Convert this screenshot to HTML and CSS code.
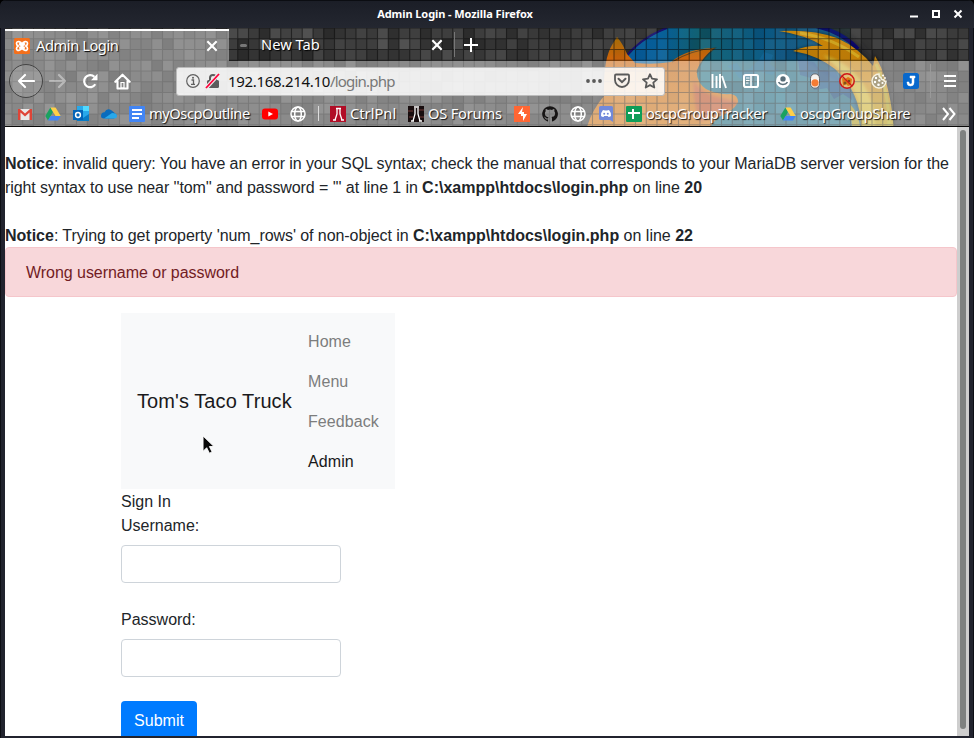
FILE: index.html
```html
<!DOCTYPE html>
<html lang="en">
<head>
<meta charset="utf-8">
<title>Admin Login</title>
<link rel="stylesheet" href="styles.css">
</head>
<body>
<svg width="0" height="0" class="defs">
  <symbol id="globe" viewBox="0 0 16 16"><g fill="none" stroke="#fff" stroke-width="1.5"><circle cx="8" cy="8" r="7"/><ellipse cx="8" cy="8" rx="3.3" ry="7"/><path d="M1.5 5.5h13M1.5 10.5h13"/></g></symbol>
  <symbol id="drive" viewBox="0 0 16 16"><path fill="#1aa260" d="M5.4 1.5 8 6 3 14.500.3 10z"/><path fill="#ffcf48" d="M5.4 1.5h5.2l5.1 8.5h-5.2z"/><path fill="#4285f4" d="M5.6 10h10.1L13 14.5H3z"/></symbol>
  <symbol id="close" viewBox="0 0 12 12"><path d="M2 2l8 8M10 2l-8 8" stroke="#fff" stroke-width="1.8" fill="none"/></symbol>
</svg>
<div class="window">
  <header class="titlebar">
    <span class="title">Admin Login - Mozilla Firefox</span>
    <svg class="controls" width="60" height="28" viewBox="0 0 60 28"><path d="M4 16.5h8" stroke="#fff" stroke-width="2"/><path d="M27 11h6v6h-6z" fill="none" stroke="#fff" stroke-width="2"/><path d="M48.500 10.500l7 7M55.500 10.500l-7 7" stroke="#fff" stroke-width="2"/></svg>
  </header>
  <div class="chrome">
    <svg class="theme" viewBox="5 28 964 99" width="964" height="99">
      <defs>
        <linearGradient id="sea" x1="0" x2="1"><stop offset="0" stop-color="#07579c"/><stop offset=".18" stop-color="#07609a"/><stop offset=".32" stop-color="#125f70"/><stop offset=".55" stop-color="#0a5481"/><stop offset="1" stop-color="#275a80"/></linearGradient>
        <linearGradient id="fur" x1="0" y1="0" x2="0" y2="1"><stop offset="0" stop-color="#a16b05"/><stop offset=".25" stop-color="#cf650c"/><stop offset=".4" stop-color="#c9701b"/><stop offset="1" stop-color="#d07a20"/></linearGradient>
        <linearGradient id="flame" x1="0" y1="0" x2="0" y2="1"><stop offset="0" stop-color="#c78508"/><stop offset=".3" stop-color="#c68208"/><stop offset=".5" stop-color="#c7871b"/><stop offset="1" stop-color="#b49a1a"/></linearGradient>
        <filter id="soft" x="-10%" y="-20%" width="120%" height="140%"><feGaussianBlur stdDeviation="3"/></filter>
        <filter id="blend" x="-10%" y="-20%" width="120%" height="140%"><feGaussianBlur stdDeviation="1.5"/></filter>
      </defs>
      <rect x="5" y="28" width="964" height="99" fill="#373737"/>
      <g id="mosaic"></g>
      <path d="M596 127Q602 80 627 60 643 40 668 28H832Q868 43 886 77 893 98 895 127z" fill="#18191b" opacity=".55" filter="url(#soft)"/>
      <path d="M610 127Q615 70 628 56 643 37 668 28H826Q858 42 879 78 891 99 892 127z" fill="url(#sea)"/>
      <path d="M700 61H806L850 90 862 127H690z" fill="#2f7182" opacity=".8" filter="url(#blend)"/>
      <path d="M624 59Q640 38 667 28" fill="none" stroke="#17126f" stroke-width="2"/>
      <path d="M816 26Q842 32 858 49" fill="none" stroke="#0b076a" stroke-width="4"/>
      <path d="M798 60l16 2 6 8 16 2 4 9 10 3 2 16-9-6-9 5-7-11-13 2-3-12-11-3z" fill="#143779" opacity=".6"/>
      <path d="M727 66l10-3 5 8 7-2 10-9 5-8 9 3-3 9 8 6-6 5-14-4-8 8-11-1-5-7z" fill="#1769a5" opacity=".4"/>
      <g id="tint"></g>
      <path d="M587 127Q592 110 604 96 603 60 612 45L617 37Q623 44 627 54L635 63Q654 65 671 62 688 48 715 48 702 57 697 70 696 82 706 89 717 95 731 94 738 95 738 102 733 112 718 117L710 127z" fill="url(#fur)"/>
      <path d="M694 79Q698 91 715 96L738 102Q729 113 714 115L700 122Q692 101 694 79z" fill="#b74932" opacity=".7" filter="url(#blend)"/>
      <path d="M672 62Q691 50 715 48 700 60 697 73" fill="none" stroke="#3d3827" stroke-width="1.200" opacity=".7"/>
      <path d="M779 31Q813 29 837 38 859 48 873 66L875 56Q889 77 894 127H861Q861 93 835 69 817 55 793 51 807 45 823 46 806 35 779 31z" fill="#07121a" opacity=".6" filter="url(#blend)"/>
      <path d="M779 31Q813 29 837 38 859 48 873 66L875 56Q889 77 894 127H861Q861 93 835 69 817 55 793 51 807 45 823 46 806 35 779 31z" fill="url(#flame)"/>
      <path d="M823 55Q847 61 862 82 875 101 875 127H863Q861 95 842 73 834 64 823 55z" fill="#d0bb3a" opacity=".8" filter="url(#blend)"/>
      <path d="M800 33Q833 38 859 57" fill="none" stroke="#d8ba30" stroke-width="3" opacity=".65"/>
      <path d="M876 64Q889 91 889 127" fill="none" stroke="#b6b12b" stroke-width="3" opacity=".65"/>
      <path d="M850 104q9 10 10 23h-8z" fill="#ac961f"/>
      <g id="texture"></g>
      <path id="lines" fill="none" stroke="#080808" stroke-opacity=".52" stroke-width="1.100"/>
    </svg>
    <nav class="tabs">
      <div class="tab active">
        <svg class="fav" width="16" height="16" viewBox="0 0 16 16"><rect width="16" height="16" rx="1.500" fill="#f4701c"/><path d="M8 6.300C7 3 2.500 2.600 2.500 5.400q0 1.700 1.700 2.600-1.700.9-1.700 2.600C2.500 13.400 7 13 8 9.700c1 3.300 5.500 3.700 5.500.9q0-1.700-1.700-2.600 1.700-.9 1.700-2.600C13.500 2.600 9 3 8 6.300zM5 5.500l5.800 5M11 5.500l-5.800 5" fill="none" stroke="#fff" stroke-width="1.700"/></svg>
        <span class="tabname">Admin Login</span>
        <svg width="14" height="14"><use href="#close"/></svg>
      </div>
      <div class="tab second">
        <i class="dash"></i><span class="tabname">New Tab</span>
        <svg width="14" height="14"><use href="#close"/></svg>
      </div>
      <svg class="plus" width="16" height="16" viewBox="0 0 16 16"><path d="M8 1v14M1 8h14" stroke="#fff" stroke-width="2"/></svg>
    </nav>
    <div class="toolbar">
      <span class="tool back"><svg width="18" height="16" viewBox="0 0 18 16"><path d="M17 8H2M8 2L2 8l6 6" fill="none" stroke="#fff" stroke-width="2.200" stroke-linecap="round" stroke-linejoin="round"/></svg></span>
      <span class="tool"><svg width="18" height="16" viewBox="0 0 18 16" opacity=".4"><path d="M1 8h15M10 2l6 6-6 6" fill="none" stroke="#fff" stroke-width="2.200" stroke-linecap="round" stroke-linejoin="round"/></svg></span>
      <span class="tool"><svg width="16" height="16" viewBox="0 0 16 16"><path d="M13.300 11.300A6 6 0 1 1 12.400 3.900" fill="none" stroke="#fff" stroke-width="2.200"/><path d="M15.500.7v6.500H9z" fill="#fff"/></svg></span>
      <span class="tool"><svg width="17" height="17" viewBox="0 0 17 17"><path d="M1.300 8.800L8.500 1.700l7.200 7.100M3.500 8v7.500h10V8" fill="none" stroke="#fff" stroke-width="2.100" stroke-linecap="round" stroke-linejoin="round"/><path d="M7 15V9.500h3V15z" fill="none" stroke="#fff" stroke-width="1.200"/></svg></span>
      <div class="urlbar">
        <svg width="14" height="14" viewBox="0 0 14 14"><circle cx="7" cy="7" r="6.300" fill="none" stroke="#606060" stroke-width="1.200"/><path d="M5.500 6H7.500v4.200M5 10.300h4" fill="none" stroke="#606060" stroke-width="1.300"/><circle cx="7" cy="3.700" r="1" fill="#606060"/></svg>
        <svg class="lock" width="16" height="16" viewBox="0 0 16 16"><rect x="2" y="7" width="12" height="8" rx="1.500" fill="#5c5c5c"/><path d="M5 7V5a3 3 0 0 1 6 0v2" fill="none" stroke="#5c5c5c" stroke-width="2"/><path d="M1 15L14 1" stroke="#eee" stroke-width="4"/><path d="M1 15L14 1" stroke="#ff0039" stroke-width="1.800"/></svg>
        <span class="url">192.168.214.10<span class="path">/login.php</span></span>
        <svg width="16" height="16" viewBox="0 0 16 16" fill="#5a5a5a"><circle cx="2" cy="8" r="1.900"/><circle cx="8" cy="8" r="1.900"/><circle cx="14" cy="8" r="1.900"/></svg>
        <svg width="16" height="16" viewBox="0 0 16 16" fill="none" stroke="#5a5a5a"><path d="M2 1.500h12q1 0 1 1V7A7 7 0 0 1 1 7V2.500q0-1 1-1z" stroke-width="1.800"/><path d="M4.500 5.800L8 9.200l3.500-3.400" stroke-width="2" stroke-linecap="round"/></svg>
        <svg width="16" height="16" viewBox="0 0 16 16"><path d="M8 1.200l2 4.500 5 .6-3.700 3.300 1 4.900L8 12.100l-4.300 2.400 1-4.900L1 6.300l5-.6z" fill="none" stroke="#5a5a5a" stroke-width="1.800" stroke-linejoin="round"/></svg>
      </div>
      <div class="extras">
        <span class="tool"><svg width="16" height="16" viewBox="0 0 16 16"><path d="M1.500 1v14M5.500 3v12M9 1v14M11 3l4 12" stroke="#fff" stroke-width="1.900"/></svg></span>
        <span class="tool"><svg width="16" height="16" viewBox="0 0 16 16"><rect x="1" y="2" width="14" height="12" rx="1.800" fill="none" stroke="#fff" stroke-width="2"/><path d="M8 2v12" stroke="#fff" stroke-width="1.500"/><path d="M3 5h3.500M3 7.500h3.500M3 10h2.500" stroke="#fff" stroke-width="1.200"/></svg></span>
        <span class="tool"><svg width="16" height="16" viewBox="0 0 16 16"><circle cx="8" cy="8" r="7" fill="#fff"/><circle cx="8" cy="5.900" r="2.700" fill="#596e79"/><path d="M3.500 9.200a5 4 0 0 0 9 0" fill="none" stroke="#596e79" stroke-width="1.600"/></svg></span>
        <span class="tool"><svg width="16" height="16" viewBox="0 0 16 16"><rect x="3.500" y=".8" width="9" height="14.400" rx="4.500" fill="#f4f1ee" stroke="#60646c"/><circle cx="8" cy="9.800" r="3.600" fill="#f47b35"/></svg></span>
        <span class="tool"><svg width="16" height="16" viewBox="0 0 16 16"><circle cx="8" cy="8" r="6.800" fill="#e5bf78"/><path d="M3 5l3 1 3-2 4 2-1 6-3 1-2-2-3 2z" fill="#de7815"/><circle cx="6" cy="10" r="1.500" fill="#80501c"/><circle cx="10" cy="8" r="1.200" fill="#784117"/><circle cx="8" cy="8" r="7.200" fill="none" stroke="#cf1717" stroke-width="1.500"/><path d="M3 3l10 10" stroke="#cf1717" stroke-width="1.300"/></svg></span>
        <span class="tool"><svg width="16" height="16" viewBox="0 0 16 16"><path d="M8 1A7 7 0 1 0 15 8.500q-2 .3-2.500-1.700-2.300.2-2.400-1.900Q7.700 4 8 1z" fill="#aaa083" stroke="#f4f0df" stroke-width="1.500"/><g fill="#fff"><circle cx="5" cy="5" r="1.200"/><circle cx="8.300" cy="7.500" r="1.200"/><circle cx="4" cy="9" r="1.200"/><circle cx="7.500" cy="11.800" r="1.300"/><circle cx="11.500" cy="10" r="1.100"/><circle cx="12" cy="2.500" r="1"/><circle cx="14" cy="5" r=".9"/></g></svg></span>
        <span class="tool"><svg width="16" height="16" viewBox="0 0 16 16"><rect width="16" height="16" rx="2.500" fill="#0868cc"/><path d="M7 3h5v2h-1v4.500a3.500 3.500 0 0 1-7 0V9h2v.5a1.500 1.500 0 0 0 3 0V5H7z" fill="#fff" stroke="#fff" stroke-width=".5"/></svg></span>
        <i class="divider"></i>
        <span class="tool menu"><svg width="14" height="14" viewBox="0 0 14 14"><path d="M1 2h12M1 7h12M1 12h12" stroke="#fff" stroke-width="2"/></svg></span>
      </div>
    </div>
    <div class="bookmarks">
      <svg viewBox="0 0 16 16"><path d="M2 3h12v11H2z" fill="#e9e9e9"/><path d="M1 3h2l5 4.500L13 3h2v11h-2.500V6.500L8 10.500l-4.500-4V14H1z" fill="#df4437"/></svg>
      <svg><use href="#drive"/></svg>
      <svg viewBox="0 0 16 16"><path d="M4 0h12v12H4z" fill="#28a8ea"/><path d="M10 0h6v5h-6z" fill="#50d9ff"/><path d="M4 8l6 4 6-4v7H4z" fill="#087bc5"/><rect y="4" width="10" height="10" fill="#0364b8"/><circle cx="5" cy="9" r="2.400" fill="none" stroke="#fff" stroke-width="1.500"/></svg>
      <svg viewBox="0 0 16 16"><path d="M0 10Q0 6.500 3.500 6.200 6 1.500 10.700 4.500l2.200 1.800L16 9.500l-3 3H3Q0 12.500 0 10z" fill="#0a6cbd"/><path d="M3 12.500l8-5.500Q16 7 16 10q0 2.500-3 2.500z" fill="#28a8ea"/></svg>
      <span class="bookmark outline"><svg viewBox="0 0 16 16"><rect width="16" height="16" rx="1" fill="#4285f4"/><path d="M3 4h10M3 8h10M3 12h7" stroke="#fff" stroke-width="1.800"/></svg><b>myOscpOutline</b></span>
      <svg viewBox="0 0 16 16"><rect y="2.500" width="16" height="11" rx="3" fill="#f00"/><path d="M6.300 5.500L11 8l-4.700 2.500z" fill="#fff"/></svg>
      <svg><use href="#globe"/></svg>
      <i class="sep"></i>
      <span class="bookmark control"><svg viewBox="0 0 16 16"><rect width="16" height="16" fill="#b10d26"/><path d="M6 2.500h5M7 3v5l-2 6M10 3v5l2 6M6 14H3M11 14h3" stroke="#fff" stroke-width="1.300" fill="none"/></svg><b>CtrlPnl</b></span>
      <span class="bookmark forums"><svg viewBox="0 0 16 16"><rect width="16" height="16" fill="#180d0e"/><path d="M0 5h5M11 4h5M1 11h4M12 11h4" stroke="#703b36"/><path d="M6 1h5M7 2v6l-2 7M10 2v6l2 7M3 15h3M11 15h3" stroke="#fff" stroke-width="1.300" fill="none"/></svg><b>OS Forums</b></span>
      <svg viewBox="0 0 16 16"><rect width="16" height="16" fill="#ff6633"/><path d="M9 1L4 8h3v2h2v5l4-7h-3V6H8z" fill="#fff"/></svg>
      <svg viewBox="0 0 16 16"><path d="M8 .2a7.800 7.800 0 0 0-2.500 15.200c.4.100.5-.2.500-.4v-1.500c-2.200.5-2.700-1-2.700-1-.4-.9-.9-1.200-.9-1.200-.7-.5 0-.5 0-.5.8.1 1.200.8 1.200.8.700 1.200 1.900.9 2.400.7 0-.5.300-.9.500-1.100-1.800-.2-3.600-.9-3.600-3.900 0-.9.300-1.600.8-2.100 0-.2-.3-1 .1-2.100 0 0 .7-.2 2.200.8a7.500 7.500 0 0 1 4 0c1.500-1 2.200-.8 2.200-.8.400 1.100.1 1.900.1 2.100.5.500.8 1.200.8 2.100 0 3-1.800 3.700-3.600 3.900.3.200.5.700.5 1.400V15c0 .2.200.5.600.4A7.800 7.800 0 0 0 8 .2z" fill="#171515"/></svg>
      <svg><use href="#globe"/></svg>
      <svg viewBox="0 0 16 16"><path d="M2.500 0h11q1.500 0 1.500 1.500V16l-3-2H2.500Q1 14 1 12.500v-11Q1 0 2.500 0z" fill="#7289da"/><path d="M5 4l2 .6h2L11 4q2 2 2 6-1.200 1-2.500 1l-.7-1H6.200l-.7 1Q4 11 3 10q0-4 2-6z" fill="#fff"/><circle cx="6.200" cy="7.800" r="1" fill="#7289da"/><circle cx="9.800" cy="7.800" r="1" fill="#7289da"/></svg>
      <span class="bookmark tracker"><svg viewBox="0 0 16 16"><rect width="16" height="16" rx="1" fill="#0f9d58"/><path d="M7 3v10M2 7h12" stroke="#fff" stroke-width="2"/></svg><b>oscpGroupTracker</b></span>
      <span class="bookmark share"><svg><use href="#drive"/></svg><b>oscpGroupShare</b></span>
      <svg class="more" viewBox="0 0 16 16"><path d="M2 2l5 6-5 6M8.500 2l5 6-5 6" fill="none" stroke="#fff" stroke-width="2"/></svg>
    </div>
  </div>
  <div class="viewport">
    <main class="page">
      <p class="notice query"><b>Notice</b>: invalid query: You have an error in your SQL syntax; check the manual that corresponds to your MariaDB server version for the<br><span class="near">right syntax to use near ''tom'' and password = ''' at line 1 in </span><b>C:\xampp\htdocs\login.php</b><span class="online"> on line </span><b>20</b></p>
      <p class="notice"><b>Notice</b>: Trying to get property 'num_rows' of non-object in <b>C:\xampp\htdocs\login.php</b><span class="online"> on line </span><b>22</b></p>
      <div class="alert">Wrong username or password</div>
      <div class="container">
        <nav class="navbar"><span class="brand">Tom's Taco Truck</span><div class="links"><a>Home</a><a>Menu</a><a>Feedback</a><a class="current">Admin</a></div></nav>
        <div class="heading">Sign In</div>
        <form>
          <label for="username">Username:</label><input id="username">
          <label for="password">Password:</label><input id="password" type="password">
          <button type="button">Submit</button>
        </form>
      </div>
    </main>
    <aside class="scrollbar"><i></i></aside>
  </div>
  <svg class="pointer" width="13" height="20" viewBox="0 0 14 22"><path d="M1 1v17l4-4 3 6 3-1.300-3-6h5z" fill="#080808" stroke="#fff" stroke-width="1"/></svg>
</div>
<script src="theme.js"></script>
</body>
</html>
```
FILE: styles.css
```css
* { box-sizing: border-box; }
body { margin: 0; width: 974px; height: 738px; overflow: hidden; background: #000; }
.defs { position: absolute; }
.window { position: relative; height: 738px; padding: 0 5px 2px; border-radius: 6px 6px 0 0; background: linear-gradient(90deg, #0c0e14 1px, #21232e 1px, #21232e 973px, #0c0e14 973px); overflow: hidden; display: flex; flex-direction: column; }
.titlebar { height: 28px; flex: none; margin: 0 -5px; display: flex; align-items: center; justify-content: center; position: relative; background: linear-gradient(#0b0d12 1px, #1b1e27 1px, #242730); color: #fff; font: bold 11px/28px "Noto Sans", sans-serif; }
.title { letter-spacing: -.08px; margin-right: 64px; position: relative; }
.controls { position: absolute; right: 8px; top: 0; }
.chrome { position: relative; height: 99px; flex: none; border-bottom: 1px solid #090909; overflow: hidden; color: #fff; font: 15px "Noto Sans", sans-serif; }
.theme { position: absolute; inset: 0; }
.tabs { position: relative; height: 33px; display: flex; align-items: center; text-shadow: 1px 1px 1px #000; }
.tab { height: 33px; display: flex; align-items: center; }
.active { width: 224px; height: 32px; padding: 0 10px 0 9px; border-top: 2px solid #fff; background: rgba(255,255,255,.4); margin-top: 1px; }
.active .tabname { margin-left: 6px; letter-spacing: -.45px; }
.tabname { flex: 1; font-size: 14.700px; line-height: 20px; padding-bottom: 2px; white-space: nowrap; }
.second { width: 226px; padding: 1px 10px 0 11px; border-right: 1px solid #777; height: 25px; }
.dash { width: 7px; height: 3px; border-radius: 2px; background: #777; margin-right: 14px; }
.plus { margin-left: 8px; }
.toolbar { position: relative; display: flex; align-items: center; height: 40px; padding-left: 5px; background: rgba(255,255,255,.4); }
.tool { width: 32px; height: 32px; display: flex; align-items: center; justify-content: center; flex: none; }
.tool.back { width: 34px; height: 34px; margin-right: -1px; margin-left: -1px; border: 1px solid #444; border-radius: 50%; background: rgba(255,255,255,.13); }
.urlbar { width: 489px; height: 29px; margin-left: 38px; padding: 0 6px 0 9px; display: flex; align-items: center; gap: 12px; border: 1px solid #bbb; border-radius: 3px; background: rgba(255,255,255,.85); color: #111; flex: none; }
.lock { margin-left: -7px; }
.url { flex: 1; margin-left: -5px; font-size: 15px; letter-spacing: -.32px; }
.path { color: #777; letter-spacing: -.8px; }
.extras { display: flex; align-items: center; margin-left: 38px; }
.divider { width: 1px; height: 34px; margin-left: 3px; background: #999; }
.menu { margin-left: 3px; }
.bookmarks { position: relative; height: 25px; display: flex; align-items: center; gap: 12px; padding-left: 12px; background: rgba(255,255,255,.4); white-space: nowrap; text-shadow: 1px 1px 1px #111; }
.bookmarks svg { width: 16px; height: 16px; flex: none; }
.bookmark { display: flex; align-items: center; gap: 4px; flex: none; }
.bookmark b { font-weight: 400; font-size: 14.700px; line-height: 20px; padding-bottom: 2px; letter-spacing: -.33px; }
.outline { width: 121px; }
.outline b { letter-spacing: -.45px; }
.control { width: 66px; }
.control b { letter-spacing: 0; }
.forums { width: 94px; }
.forums b { letter-spacing: -.22px; }
.tracker { width: 142px; }
.share { width: 130px; }
.sep { width: 1px; height: 15px; background: #ddd; margin-right: -1px; }
.bookmarks .more { margin-left: 19px; }
.viewport { display: flex; flex: 1; min-height: 0; background: #fff; overflow: hidden; }
.page { width: 952px; flex: none; padding-top: 25px; color: #212529; font: 16px/24px "Liberation Sans", sans-serif; }
.notice { margin: 0; white-space: nowrap; letter-spacing: -.07px; }
.query { margin-bottom: 24px; letter-spacing: -.085px; }
.near { letter-spacing: -.09px; }
.notice b, .online { letter-spacing: 0; }
.alert { height: 50px; margin: -1px 0 16px; padding: 13px 20px 11px; letter-spacing: -.04px; color: #721c24; background: #f8d7da; border: 1px solid #f5c6cb; border-radius: 4px; }
.container { margin-left: 116px; }
.navbar { width: 274px; height: 176px; padding: 8px 16px; display: flex; align-items: center; background: #f8f9fa; }
.brand { width: 155px; margin-right: 16px; font-size: 20px; letter-spacing: .08px; color: #1a1a1c; white-space: nowrap; }
.links a { display: block; height: 40px; padding: 9px 0 7px; letter-spacing: .08px; color: #7c7d7d; }
.links .current { color: #171819; }
.heading { padding-top: 1px; }
form { display: flex; flex-direction: column; align-items: flex-start; }
label { margin-bottom: 7px; }
input { width: 220px; height: 38px; margin-bottom: 25px; border: 1px solid #ced4da; border-radius: 4px; background: #fff; }
#password { margin-bottom: 24px; }
button { width: 76px; height: 38px; padding: 2px 0 0; border: 0; border-radius: 4px; color: #fff; background: #007bff; font: 16px "Liberation Sans", sans-serif; }
.scrollbar { width: 12px; padding: 3px 3px 7px; background: #cecece; display: flex; }
.scrollbar i { width: 6px; border-radius: 3px; background: #7e8180; }
.pointer { position: absolute; left: 202px; top: 435px; }
```
FILE: theme.js
```js
const pitch = 10.75;
let seed = 41;
function random() {
  seed = (seed * 16807) % 2147483647;
  return seed / 2147483647;
}
function cells(id, color, maxOpacity, left, right) {
  const group = document.getElementById(id);
  for (let y = 28; y < 127; y += pitch) {
    for (let x = 1.25; x < 969; x += pitch) {
      if (x < left || x > right) continue;
      const cell = document.createElementNS('http://www.w3.org/2000/svg', 'rect');
      cell.setAttribute('x', x);
      cell.setAttribute('y', y);
      cell.setAttribute('width', pitch);
      cell.setAttribute('height', pitch);
      const light = random() > .4;
      cell.setAttribute('fill', light ? color : '#000');
      cell.setAttribute('opacity', random() * maxOpacity);
      group.appendChild(cell);
    }
  }
}
cells('mosaic', '#888', .25, 0, 969);
cells('tint', '#299cac', .14, 670, 840);
cells('texture', '#fff', .06, 0, 969);
let lines = '';
for (let x = 1.25; x < 969; x += pitch) lines += `M${x} 28V127`;
for (let y = 28; y < 127; y += pitch) lines += `M5 ${y}H969`;
document.getElementById('lines').setAttribute('d', lines);
```
